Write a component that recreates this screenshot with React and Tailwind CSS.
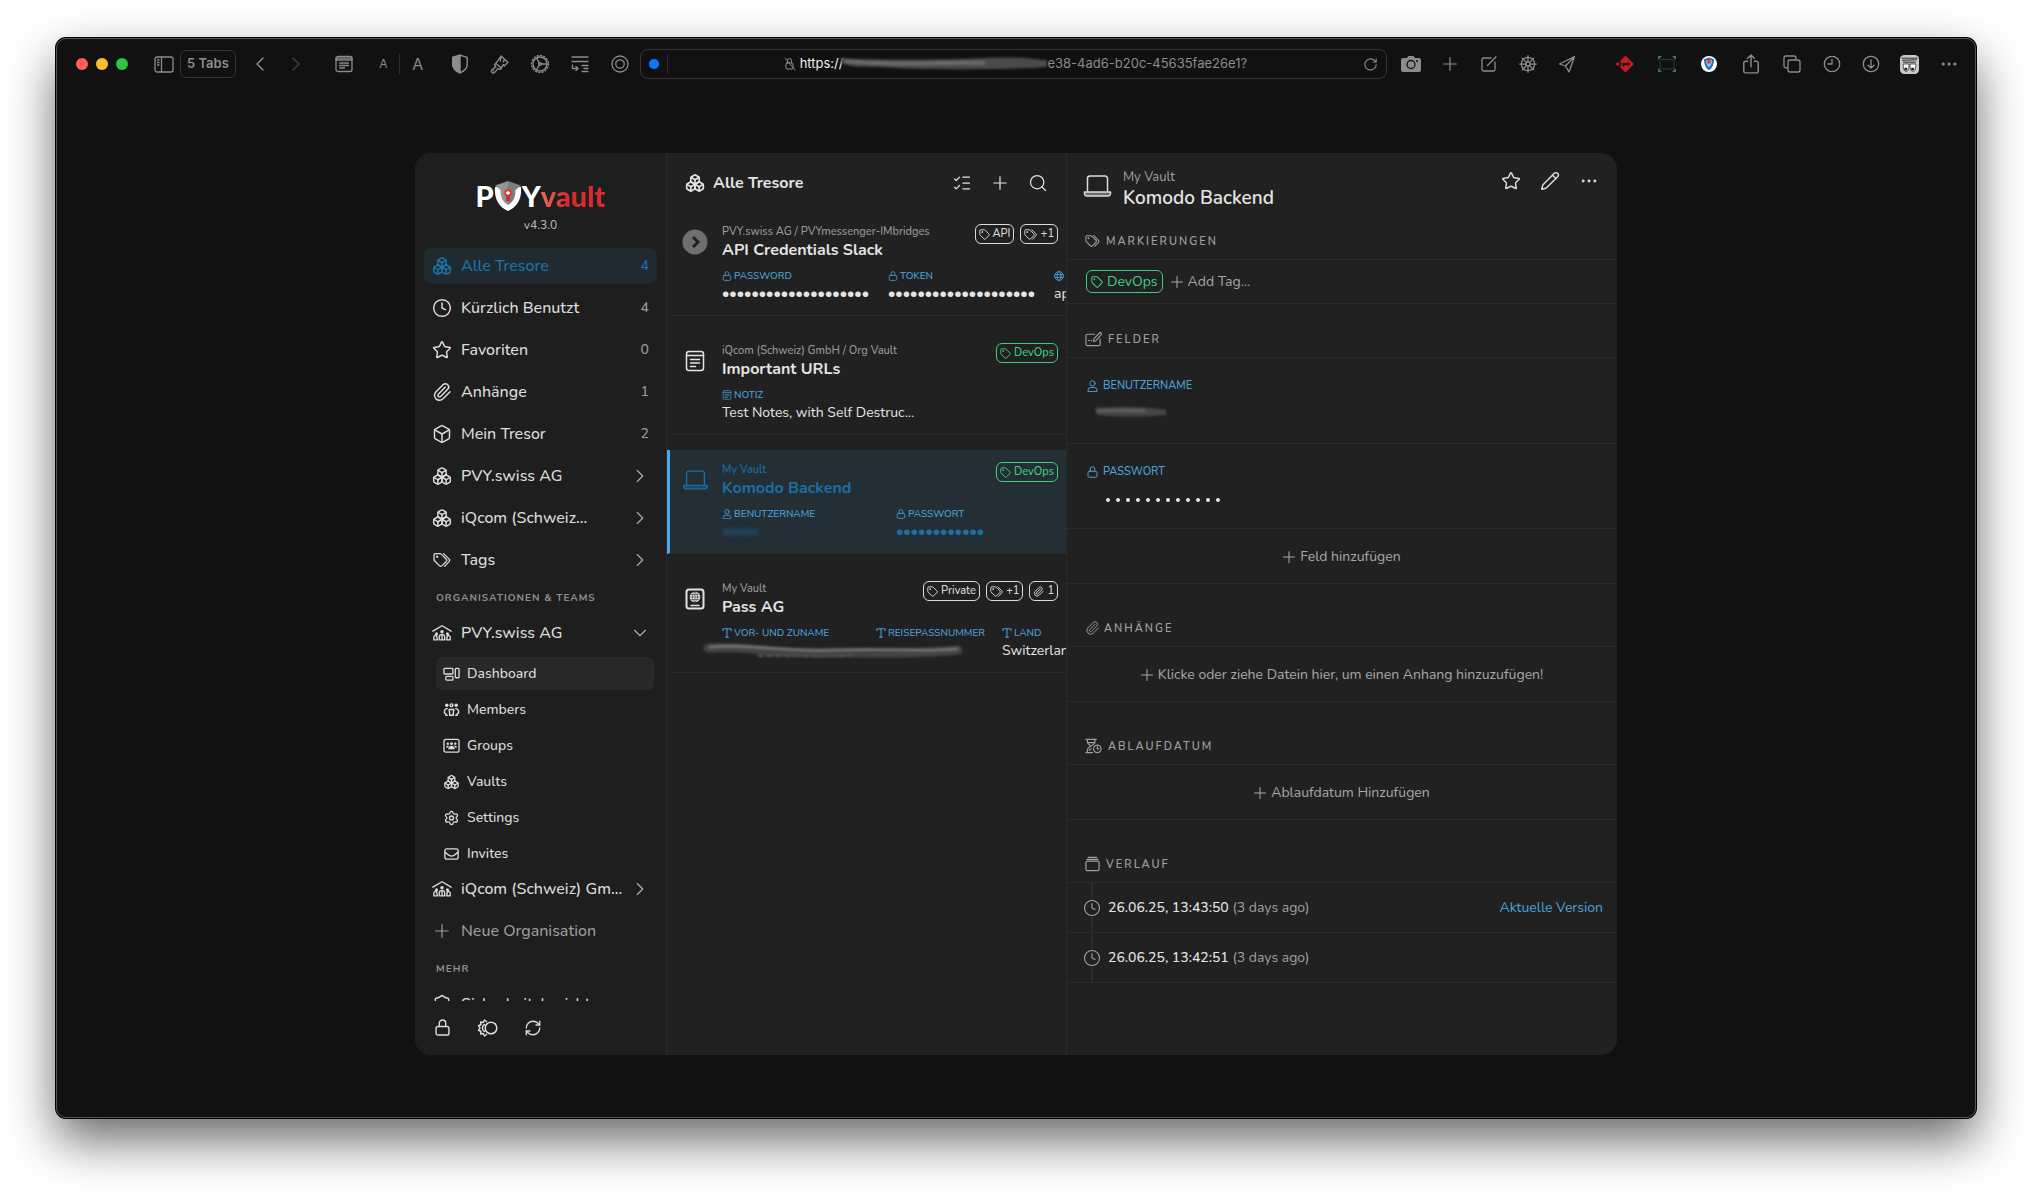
import {
    Box, Boxes, ChevronDown, ChevronLeft, ChevronRight, Clock, Ellipsis, ListChecks, Paperclip,
    Pencil, RefreshCw, RotateCw, Search, Settings, ShieldCheck, ShipWheel, Star,
} from 'lucide-react'

const stroke = { fill: 'none', stroke: 'currentColor', strokeWidth: 1.5, strokeLinecap: 'round', strokeLinejoin: 'round' }

// ---------- Icons ----------

function Plus({ className }) {
    return (
        <svg viewBox="0 0 14 14" className={className} {...stroke} strokeWidth="1.200">
            <path d="M7 .7v12.600M.7 7h12.600" />
        </svg>
    )
}

function Lock({ className }) {
    return (
        <svg viewBox="0 0 14 16" className={className} {...stroke} strokeWidth="1.300">
            <rect x="1" y="7" width="12" height="8" rx="1.800" />
            <path d="M4 7V4a3 3 0 0 1 6 0v3" />
        </svg>
    )
}

function User({ className }) {
    return (
        <svg viewBox="0 0 14 16" className={className} {...stroke} strokeWidth="1.300">
            <circle cx="7" cy="4.500" r="3.500" />
            <path d="M1 15v-1.500A3.500 3.500 0 0 1 4.500 10h5a3.500 3.500 0 0 1 3.500 3.500V15z" />
        </svg>
    )
}

function Tag({ className }) {
    return (
        <svg viewBox="0 0 14 14" className={className} {...stroke} strokeWidth="1.200">
            <path d="M1 2.200A1.200 1.200 0 0 1 2.200 1h4.500a1.500 1.500 0 0 1 1.060.440l4.800 4.800a1.500 1.500 0 0 1 0 2.120l-4.200 4.200a1.500 1.500 0 0 1-2.120 0l-4.800-4.800A1.500 1.500 0 0 1 1 6.700z" />
            <circle cx="3.900" cy="3.900" r=".5" />
        </svg>
    )
}

function Tags({ className }) {
    return (
        <svg viewBox="0 0 17 14" className={className} {...stroke} strokeWidth="1.200">
            <path d="M1 2.200A1.200 1.200 0 0 1 2.200 1h4.500a1.500 1.500 0 0 1 1.060.440l4.800 4.800a1.500 1.500 0 0 1 0 2.120l-4.200 4.200a1.500 1.500 0 0 1-2.120 0l-4.800-4.800A1.500 1.500 0 0 1 1 6.700z" />
            <circle cx="3.900" cy="3.900" r=".5" />
            <path d="M10 1l5.200 5.200a1.700 1.700 0 0 1 0 2.300L11 13" />
        </svg>
    )
}

function Text({ className }) {
    return (
        <svg viewBox="0 0 12 12" className={className} {...stroke} strokeWidth="1.200">
            <path d="M1 3.200V1h10v2.200M6 1v10M4.200 11h3.600" />
        </svg>
    )
}

function Laptop({ className }) {
    return (
        <svg viewBox="0 0 28 22" className={className} {...stroke}>
            <path d="M4 16V3.500A2.500 2.500 0 0 1 6.500 1h15A2.500 2.500 0 0 1 24 3.500V16" />
            <path d="M1 17h26v1.500a2.500 2.500 0 0 1-2.500 2.500h-21A2.500 2.500 0 0 1 1 18.500z" fill="currentColor" fillOpacity="0.4" />
        </svg>
    )
}

function Note({ className }) {
    return (
        <svg viewBox="0 0 20 22" className={className} {...stroke}>
            <rect x="1.500" y="1.500" width="17" height="19" rx="2.500" />
            <path d="M1.500 5.500h17M5.500 9.500h9M5.500 13h9M5.500 16.500h5" />
        </svg>
    )
}

function Passport({ className }) {
    return (
        <svg viewBox="0 0 20 22" className={className} {...stroke} strokeWidth="2">
            <rect x="1.500" y="1.500" width="17" height="19" rx="2.500" />
            <circle cx="10" cy="9" r="5.300" fill="currentColor" stroke="none" />
            <path d="M5 9h10M10 4v10M6 6.500h8M6 11.500h8" stroke="#212121" strokeWidth="0.500" />
            <ellipse cx="10" cy="9" rx="2.500" ry="5" stroke="#212121" strokeWidth="0.500" />
            <path d="M6 17.500h8" strokeWidth="1.500" />
        </svg>
    )
}

function CircleArrow({ className }) {
    return (
        <svg viewBox="0 0 26 26" className={className}>
            <circle cx="13" cy="13" r="12.500" fill="#6f6f6f" />
            <path d="M11 8l5 5-5 5" fill="none" stroke="#212121" strokeWidth="3" />
        </svg>
    )
}

function House({ className }) {
    return (
        <svg viewBox="0 0 22 18" className={className} {...stroke}>
            <path d="M1 7l10-6 10 6" />
            <circle cx="11" cy="7.500" r="1.900" fill="currentColor" stroke="none" />
            <circle cx="5" cy="10" r="1.700" fill="currentColor" stroke="none" />
            <circle cx="17" cy="10" r="1.700" fill="currentColor" stroke="none" />
            <path d="M8 16.500v-3a3 3 0 0 1 6 0v3zM2 16.500v-2.500a2 2 0 0 1 3-2M20 16.500v-2.500a2 2 0 0 0-3-2M2 16.500h3M17 16.500h3M11 12v4M5 12l1 4.500M17 12l-1 4.500" strokeWidth="1.500" />
        </svg>
    )
}

function Dashboard({ className }) {
    return (
        <svg viewBox="0 0 18 16" className={className} {...stroke} strokeWidth="1.400">
            <rect x="1" y="2" width="9.500" height="6" rx="1" />
            <rect x="3" y="10.500" width="7.500" height="4" rx="1" />
            <rect x="13" y="2" width="4" height="10" rx="1" />
        </svg>
    )
}

function Members({ className }) {
    return (
        <svg viewBox="0 0 18 14" className={className} {...stroke}>
            <circle cx="4" cy="2" r="1.800" fill="currentColor" stroke="none" />
            <circle cx="9" cy="2" r="1.500" />
            <circle cx="14" cy="2" r="1.800" fill="currentColor" stroke="none" />
            <path d="M7 12.500V9.500L6.500 6.500h5L11 9.500v3zM4.500 5.500c-2 0-3.200 1.500-3 4 .1 1 1 1.500 1.500 1.500v1.500h1.500M13.500 5.500c2 0 3.200 1.500 3 4-.1 1-1 1.500-1.500 1.500v1.500h-1.500" />
        </svg>
    )
}

function Groups({ className }) {
    return (
        <svg viewBox="0 0 18 16" className={className} {...stroke} strokeWidth="1.400">
            <rect x="1" y="1" width="16" height="13.500" rx="2" />
            <g fill="currentColor" stroke="none">
                <circle cx="5" cy="5.500" r="1.300" />
                <circle cx="9" cy="5.500" r="1.500" />
                <circle cx="13" cy="5.500" r="1.300" />
                <path d="M3 9.500q1-2.500 3-2l-.5 2zM15 9.500q-1-2.500-3-2l.5 2zM5.500 11.500c0-5 7-5 7 0z" />
            </g>
        </svg>
    )
}

function Envelope({ className }) {
    return (
        <svg viewBox="0 0 18 16" className={className} {...stroke} strokeWidth="1.400">
            <rect x="2" y="2.500" width="14" height="11" rx="2" />
            <path d="M2 6l4.500 3.500q2.500 1.500 5 0L16 6" />
        </svg>
    )
}

function Globe({ className }) {
    return (
        <svg viewBox="0 0 12 12" className={className} {...stroke} strokeWidth="1">
            <circle cx="6" cy="6" r="5.300" />
            <ellipse cx="6" cy="6" rx="2.300" ry="5.300" />
            <path d="M1.200 4.300h9.600M1.200 7.700h9.600" />
        </svg>
    )
}

function FieldEdit({ className }) {
    return (
        <svg viewBox="0 0 18 16" className={className} {...stroke} strokeWidth="1.200">
            <path d="M10 3H2.500A1.500 1.500 0 0 0 1 4.500v9A1.500 1.500 0 0 0 2.500 15h12a1.500 1.500 0 0 0 1.500-1.500V8" />
            <path d="M9 10.500l.6-2.800L15.400 1.400q1.300-.6 1.800.6t-.2 1.700L11.500 9.800z" />
            <path d="M4 9.500h.1M6.500 9.500h.1" strokeWidth="1.600" />
        </svg>
    )
}

function Hourglass({ className }) {
    return (
        <svg viewBox="0 0 18 16" className={className} {...stroke} strokeWidth="1.300">
            <path d="M1 1h11M1 15h7M2.500 1v2.500q0 2 3.500 4.500-3.500 2.500-3.500 4.500V15M10.500 1v2.500q0 2-4 4.500M4 4.500h5M4.500 12.500l2-1.500" />
            <circle cx="13" cy="11" r="4" />
            <path d="M13 9v2h1.500" />
        </svg>
    )
}

function History({ className }) {
    return (
        <svg viewBox="0 0 16 16" className={className} {...stroke} strokeWidth="1.300">
            <rect x="1" y="5" width="14" height="10" rx="1.500" />
            <path d="M2 3h12M3.500 1h9" />
        </svg>
    )
}

function SunMoon({ className }) {
    return (
        <svg viewBox="0 0 22 18" className={className} {...stroke}>
            <circle cx="15" cy="9" r="5.800" />
            <path d="M10.500 2.500L8.500 1l-1.200 2.500-2.700-.5.3 2.700L2.500 6.700 4 9l-1.500 2.300 2.400 1-.3 2.700 2.700-.5L8.500 17l2-1.500M8.500 5.500a4 4 0 0 0 0 7" />
        </svg>
    )
}

// ---------- Browser toolbar ----------

function BrowserIcon({ children, label, className = 'w-10' }) {
    return (
        <button aria-label={label} className={`${className} h-8 shrink-0 flex items-center justify-center`}>
            {children}
        </button>
    )
}

function Svg({ children, size = 'size-[18px]', ...rest }) {
    return (
        <svg viewBox="0 0 18 18" className={size} {...stroke} strokeWidth="1.300" {...rest}>
            {children}
        </svg>
    )
}

function BrowserBar() {
    return (
        <header className="h-[50px] shrink-0 flex items-center pl-[19px] text-[#8c8c8c] font-['Inter',sans-serif]">
            <div className="flex gap-2">
                <span className="size-3 rounded-full bg-[#ff5f57]" />
                <span className="size-3 rounded-full bg-[#febc2e]" />
                <span className="size-3 rounded-full bg-[#28c840]" />
            </div>
            <BrowserIcon label="Sidebar" className="ml-6 w-6">
                <svg viewBox="0 0 20 17" className="w-5" {...stroke} strokeWidth="1.300">
                    <rect x="1" y="1" width="18" height="15" rx="2" />
                    <path d="M7.500 1v15M3.500 4h1.500M3.500 6.500h1.500M3.500 9h1.500" />
                </svg>
            </BrowserIcon>
            <button className="ml-1 h-7 px-1.5 shrink-0 rounded-md border border-[#363636] text-[13px] font-semibold">5 Tabs</button>
            <BrowserIcon label="Back" className="ml-1.5 w-9"><ChevronLeft size={24} strokeWidth={1.5} /></BrowserIcon>
            <BrowserIcon label="Forward" className="w-9 text-[#3f3f3f]"><ChevronRight size={24} strokeWidth={1.5} /></BrowserIcon>
            <BrowserIcon label="Reader" className="ml-2.5 w-10">
                <Svg>
                    <rect x="1" y="1.500" width="16" height="15" rx="2" />
                    <path d="M1 3.200h16M1 5h16M4.500 8h9M4.500 10.500h9M4.500 13h5" />
                </Svg>
            </BrowserIcon>
            <button className="w-9 h-5 pl-1 border-r border-[#2c2c2c] text-xs leading-5">A</button>
            <button className="w-9 h-5 mr-1 text-base leading-5">A</button>
            <BrowserIcon label="Privacy">
                <Svg size="size-5">
                    <path d="M9 1l6.500 2v6c0 4-3 6.500-6.500 8-3.500-1.500-6.500-4-6.500-8V3z" />
                    <path d="M9 1v16c-3.500-1.500-6.500-4-6.500-8V3z" fill="currentColor" />
                </Svg>
            </BrowserIcon>
            <BrowserIcon label="Brush">
                <Svg size="size-[19px]">
                    <path d="M10.500 1l6.500 6-3.500 3.500-.7-1.500-1.800 2.500M10.500 1L5.500 8l5.500 4.500-1.500 1.200-2-1-3 3.700a1.700 1.700 0 0 1-2.700-2.200L5.500 11 4.300 9.300 5.500 8M10.500 1l-.8 4.500M13.700 4l-1.200 2.500M3.300 15h.1" />
                </Svg>
            </BrowserIcon>
            <BrowserIcon label="Tools">
                <Svg size="size-5">
                    <circle cx="9" cy="9" r="6.300" />
                    <circle cx="9" cy="9" r="7.600" strokeDasharray="1 2" />
                    <circle cx="9" cy="9" r="1.200" />
                    <path d="M10.500 9h4.500M8.300 8L6 3.800M8.300 10L6 14.200" />
                </Svg>
            </BrowserIcon>
            <BrowserIcon label="Wrap lines">
                <Svg>
                    <path d="M1 2h16M1 6.500h16M1.500 10v3.500h5M5 11.500l2 2-2 2M11 10.500h6M13 13.500h4M11 16.500h6" />
                </Svg>
            </BrowserIcon>
            <BrowserIcon label="Focus">
                <Svg>
                    <circle cx="9" cy="9" r="8" />
                    <circle cx="9" cy="9" r="4.200" />
                </Svg>
            </BrowserIcon>
            <div className="flex-1 min-w-0 h-[30px] flex items-center rounded-lg border border-[#363636] px-2">
                <span className="size-2.5 rounded-full bg-[#0a7aff]" />
                <span className="w-px h-5 ml-2 bg-[#2c2c2c]" />
                <div className="flex-1 flex items-center justify-center text-[13px] whitespace-nowrap">
                    <svg viewBox="0 0 12 14" className="h-3.5 mr-1" {...stroke} strokeWidth="1">
                        <rect x="2" y="6" width="7" height="6" rx="1" />
                        <path d="M3.500 6V3.500a2 2 0 0 1 4 0V6M1 1l10 12" />
                    </svg>
                    <span className="text-[#f0f0f0]">https://</span>
                    <svg viewBox="0 0 206 14" className="w-[206px] -ml-0.5 blur-[1px]">
                        <path d="M0 1c20 2 100 2 143 0s50 2 63 2v7c-40 3-120 3-150 1S14 12 0 6z" fill="#4a4a4a" />
                        <path d="M4 4c40 5 90 1 140 2" stroke="#6a6a6a" strokeWidth="4" fill="none" />
                    </svg>
                    <span>e38-4ad6-b20c-45635fae26e1?</span>
                </div>
                <button aria-label="Reload"><RotateCw size={15} strokeWidth={1.75} /></button>
            </div>
            <BrowserIcon label="Screenshot" className="ml-1 w-[39px]">
                <svg viewBox="0 0 20 18" className="w-5">
                    <path d="M2 3h4l1.500-2h5L14 3h4a2 2 0 0 1 2 2v10a2 2 0 0 1-2 2H2a2 2 0 0 1-2-2V5a2 2 0 0 1 2-2z" fill="currentColor" />
                    <circle cx="10" cy="9.500" r="4" fill="none" stroke="#111" strokeWidth="1.300" />
                    <circle cx="16" cy="6" r="1" fill="#111" />
                </svg>
            </BrowserIcon>
            <BrowserIcon label="New tab" className="w-[39px]"><Plus className="w-3.5" /></BrowserIcon>
            <BrowserIcon label="Compose" className="w-[39px]">
                <Svg>
                    <path d="M11 3H3.500A1.500 1.500 0 0 0 2 4.500v10A1.500 1.500 0 0 0 3.500 16h10a1.500 1.500 0 0 0 1.500-1.500V7M7.500 10.500L16 1.800" />
                </Svg>
            </BrowserIcon>
            <BrowserIcon label="Wheel" className="w-[39px]"><ShipWheel size={20} strokeWidth={1.5} /></BrowserIcon>
            <BrowserIcon label="Send" className="w-[39px]">
                <Svg>
                    <path d="M16.500 1.500L1.500 9l6 2 3.500 6zM16.500 1.500L7.500 11" />
                </Svg>
            </BrowserIcon>
            <BrowserIcon label="Redirect" className="ml-[18px] w-[42px]">
                <svg viewBox="0 0 18 18" className="size-[18px]">
                    <path d="M9.500.5L18 9l-8.500 8.500L4 12l1.500-3L4 6z" fill="#c8191b" />
                    <circle cx="1.800" cy="9" r="1.800" fill="#c8191b" />
                    <path d="M6.500 8h5V6.500l3 2.500-3 2.500V10h-3v1.500h-2z" fill="#111" />
                </svg>
            </BrowserIcon>
            <BrowserIcon label="Capture area" className="w-[42px]">
                <svg viewBox="0 0 18 18" className="size-[18px]">
                    <path d="M0 1h4L0 5zM18 1h-4l4 4zM0 17h4l-4-4zM18 17h-4l4-4z" fill="#2f8a35" />
                    <rect x="2" y="4.500" width="14" height="9.500" rx="1" fill="none" stroke="#3a3a3a" />
                </svg>
            </BrowserIcon>
            <BrowserIcon label="PVY vault" className="w-[42px]">
                <svg viewBox="0 0 18 18" className="size-[18px]">
                    <circle cx="9" cy="9" r="8" fill="#fff" />
                    <path d="M9 2.500l5 1.800c0 5-1.500 8.500-5 11-3.500-2.500-5-6-5-11z" fill="#1c6fb3" />
                    <path d="M9 4.500l3 1c0 3-1 5.500-3 7-2-1.500-3-4-3-7z" fill="#8ec1ea" />
                    <rect x="7.500" y="4" width="3" height="4.500" fill="#d8393c" />
                </svg>
            </BrowserIcon>
            <BrowserIcon label="Share" className="w-[42px]">
                <Svg size="size-5">
                    <path d="M6 6.500H4A1.500 1.500 0 0 0 2.500 8v7.500A1.500 1.500 0 0 0 4 17h10a1.500 1.500 0 0 0 1.500-1.500V8A1.500 1.500 0 0 0 14 6.500h-2M9 11.500V1M6 3.800L9 1l3 2.800" />
                </Svg>
            </BrowserIcon>
            <BrowserIcon label="Tabs">
                <Svg>
                    <rect x="5" y="5" width="12" height="12" rx="2" />
                    <path d="M4 13H3a2 2 0 0 1-2-2V3a2 2 0 0 1 2-2h8a2 2 0 0 1 2 2v1" />
                </Svg>
            </BrowserIcon>
            <BrowserIcon label="History" className="w-[39px]">
                <Svg>
                    <circle cx="9" cy="9" r="7.700" />
                    <path d="M9 4.500V9H5" />
                </Svg>
            </BrowserIcon>
            <BrowserIcon label="Downloads" className="w-[39px]">
                <Svg>
                    <circle cx="9" cy="9" r="7.700" />
                    <path d="M9 5v8M6 10.200L9 13l3-2.800" />
                </Svg>
            </BrowserIcon>
            <BrowserIcon label="Incognito" className="w-[39px]">
                <svg viewBox="0 0 18 18" className="size-[19px]">
                    <rect width="18" height="18" rx="4" fill="#c9c9cc" />
                    <path d="M1.500 3h15M2 5l14-.5M3 6.800h12" stroke="#222" strokeWidth="0.900" />
                    <path d="M3 8.500h5.500c0 4-.5 7-2.700 7S3 12 3 8.500zM9.500 8.500H15c0 4-.5 7-2.700 7s-2.800-3-2.800-7z" fill="#fff" stroke="#222" strokeWidth=".7" />
                    <circle cx="5.500" cy="13.300" r="1.500" fill="#222" />
                    <circle cx="12" cy="13.300" r="1.500" fill="#222" />
                </svg>
            </BrowserIcon>
            <BrowserIcon label="More" className="w-[39px] mr-[7px]"><Ellipsis size={20} strokeWidth={1.75} /></BrowserIcon>
        </header>
    )
}

// ---------- Sidebar ----------

const vaultNav = [
    { icon: Boxes, name: 'Alle Tresore', count: 4, active: true },
    { icon: Clock, name: 'Kürzlich Benutzt', count: 4 },
    { icon: Star, name: 'Favoriten', count: 0 },
    { icon: Paperclip, name: 'Anhänge', count: 1 },
    { icon: Box, name: 'Mein Tresor', count: 2 },
    { icon: Boxes, name: 'PVY.swiss AG' },
    { icon: Boxes, name: 'iQcom (Schweiz...' },
    { icon: Tags, name: 'Tags', iconClass: 'px-px' },
]

const orgNav = [
    { icon: Dashboard, name: 'Dashboard', active: true },
    { icon: Members, name: 'Members' },
    { icon: Groups, name: 'Groups' },
    { icon: Boxes, name: 'Vaults' },
    { icon: Settings, name: 'Settings' },
    { icon: Envelope, name: 'Invites' },
]

function NavRow({ icon: Icon, name, active, iconClass = '', children }) {
    return (
        <a
            href="#"
            className={`h-9 shrink-0 px-2 flex items-center rounded-lg text-base ${active ? 'bg-[#202b31] text-[#1f72a8]' : 'text-[#dcdcdc]'}`}
        >
            <Icon className={`w-5 h-5 mr-[9px] shrink-0 ${iconClass}`} strokeWidth={1.75} />
            <span className="flex-1 truncate">{name}</span>
            {children}
        </a>
    )
}

function NavHeading({ children }) {
    return <h2 className="shrink-0 mt-1.5 mb-[3px] ml-3 h-4 leading-4 text-[10px] font-bold tracking-widest uppercase text-[#8f8f8f]">{children}</h2>
}

function Logo() {
    return (
        <div className="h-8 flex items-center justify-center font-['Lato',sans-serif] font-black text-[29px] leading-8">
            <span className="text-white">P</span>
            <svg viewBox="0 0 28 30" className="w-7 h-[30px]">
                <path d="M1 6h6c0 9 2 14 7 17 5-3 7-8 7-17h6c1 12-4 20-13 24C5 26 0 18 1 6z" fill="#fff" />
                <path d="M14 0l13 4.500L21.500 9c0 8-2.500 12-7.500 15z" fill="#7c7c7c" />
                <path d="M14 0v24C9 21 6.500 17 6.500 9L1 4.500z" fill="#949494" />
                <circle cx="14" cy="12" r="3.800" fill="#e0393a" />
                <path d="M12 13h4v7h-4z" fill="#c92d30" />
                <path d="M14 10v4M12 12h4" stroke="#fff" strokeWidth="1.400" />
            </svg>
            <span className="text-white">Y</span>
            <span className="bg-linear-to-r from-[#e5685c] to-[#d92b2e] to-40% bg-clip-text text-transparent">vault</span>
        </div>
    )
}

function Sidebar() {
    return (
        <aside className="w-[251px] shrink-0 flex flex-col bg-[#1e1e1e]">
            <div className="pt-[27px] pb-3.5 text-center">
                <Logo />
                <p className="mt-1 text-xs leading-[18px] text-[#b4b4b4]">v4.3.0</p>
            </div>
            <nav className="flex-1 min-h-0 overflow-hidden px-[9px] flex flex-col gap-1.5">
                {vaultNav.map((item, index) => (
                    <NavRow key={index} {...item}>
                        {item.count === undefined
                            ? <ChevronRight size={22} strokeWidth={1.25} className="-mr-0.5 text-[#b0b0b0]" />
                            : <span className={item.active ? 'text-sm' : 'text-sm text-[#9a9a9a]'}>{item.count}</span>}
                    </NavRow>
                ))}
                <NavHeading>Organisationen &amp; Teams</NavHeading>
                <div className="shrink-0">
                    <NavRow icon={House} name="PVY.swiss AG">
                        <ChevronDown size={22} strokeWidth={1.25} className="-mr-0.5 text-[#b0b0b0]" />
                    </NavRow>
                    <ul className="mt-1.5 -mb-[5px] ml-3 mr-[3px] flex flex-col gap-[3px]">
                        {orgNav.map(({ icon: Icon, name, active }) => (
                            <li key={name}>
                                <a
                                    href="#"
                                    className={`h-[33px] px-[7px] flex items-center gap-[7px] rounded-md text-sm text-[#dcdcdc] ${active ? 'bg-[#282828]' : ''}`}
                                >
                                    <Icon className="w-[17px] h-4" strokeWidth={2} />
                                    {name}
                                </a>
                            </li>
                        ))}
                    </ul>
                </div>
                <NavRow icon={House} name="iQcom (Schweiz) Gm...">
                    <ChevronRight size={22} strokeWidth={1.25} className="-mr-0.5 text-[#b0b0b0]" />
                </NavRow>
                <button className="h-9 shrink-0 px-[11px] flex items-center gap-3 text-base text-[#9a9a9a]">
                    <Plus className="w-3.5" />
                    Neue Organisation
                </button>
                <NavHeading>Mehr</NavHeading>
                <NavRow icon={ShieldCheck} name="Sicherheitsbericht" />
            </nav>
            <div className="h-[54px] shrink-0 flex items-center gap-[26px] px-5 text-[#dcdcdc]">
                <button aria-label="Sperren"><Lock className="w-[15px]" /></button>
                <button aria-label="Darstellung"><SunMoon className="w-[22px]" /></button>
                <button aria-label="Aktualisieren"><RefreshCw size={18} strokeWidth={1.75} /></button>
            </div>
        </aside>
    )
}

// ---------- Item list ----------

function Chip({ icon: Icon, children, className = 'border-[#dcdcdc] text-[#dcdcdc]' }) {
    return (
        <span className={`h-5 px-[3px] flex items-center gap-[3px] rounded-md border text-[11px] ${className}`}>
            <Icon className="w-auto h-[11px]" strokeWidth={2} />
            {children}
        </span>
    )
}

const green = 'border-[#3ecf80] text-[#3ecf80]'

const items = [
    {
        icon: CircleArrow,
        iconClass: 'w-[26px]',
        vault: 'PVY.swiss AG / PVYmessenger-IMbridges',
        title: 'API Credentials Slack',
        chips: [{ icon: Tag, text: 'API' }, { icon: Tags, text: '+1' }],
        fields: [
            { icon: Lock, label: 'Password', dots: 20, width: 'w-[166px]' },
            { icon: Lock, label: 'Token', dots: 20, width: 'w-[166px]' },
            { icon: Globe, value: 'api', width: 'w-[166px]' },
        ],
    },
    {
        icon: Note,
        iconClass: 'w-5',
        vault: 'iQcom (Schweiz) GmbH / Org Vault',
        title: 'Important URLs',
        chips: [{ icon: Tag, text: 'DevOps', className: green }],
        fields: [{ icon: Note, label: 'Notiz', value: 'Test Notes, with Self Destruc...', width: 'w-[260px]' }],
    },
    {
        icon: Laptop,
        iconClass: 'w-[25px]',
        vault: 'My Vault',
        title: 'Komodo Backend',
        active: true,
        chips: [{ icon: Tag, text: 'DevOps', className: green }],
        fields: [
            { icon: User, label: 'Benutzername', width: 'w-[174px]', smudge: true },
            { icon: Lock, label: 'Passwort', dots: 12, width: 'w-[166px]' },
        ],
    },
    {
        icon: Passport,
        iconClass: 'w-5',
        vault: 'My Vault',
        title: 'Pass AG',
        masked: true,
        chips: [{ icon: Tag, text: 'Private' }, { icon: Tags, text: '+1' }, { icon: Paperclip, text: '1' }],
        fields: [
            { icon: Text, label: 'Vor- und Zuname', width: 'w-[154px]' },
            { icon: Text, label: 'Reisepassnummer', width: 'w-[126px]' },
            { icon: Text, label: 'Land', value: 'Switzerland', width: 'w-[126px]' },
        ],
    },
]

function Field({ icon: Icon, label, value, dots, width, smudge }) {
    return (
        <div className={`${width} shrink-0`}>
            <div className="h-4 flex items-center gap-[2px] text-[10px] uppercase text-[#4aa3dc]">
                <Icon className="w-2.5 h-2.5" />
                {label}
            </div>
            <div className="h-5 flex items-center text-sm font-normal whitespace-nowrap">
                {dots && <span className="font-['Liberation_Sans',sans-serif] text-[21px] leading-5">{'•'.repeat(dots)}</span>}
                {smudge && <span className="w-9 h-1.5 rounded-full bg-[#1f5d88] opacity-50 blur-[2px]" />}
                {value}
            </div>
        </div>
    )
}

function Item({ icon: Icon, iconClass, vault, title, chips, fields, active, masked }) {
    return (
        <li
            className={`relative h-[104px] mb-[15px] pr-2 flex border-b border-b-[#2b2b2b] border-l-[3px] ${active ? 'bg-[#232e35] border-l-[#4aa8e8] text-[#1d6ea5]' : 'border-l-transparent text-[#e4e4e4]'}`}
        >
            <div className="w-[52px] shrink-0 pt-[17px] pr-0.5 h-11 flex justify-center">
                <Icon className={`${iconClass} h-[26px]`} />
            </div>
            <div className="flex-1 min-w-0 pt-3">
                <div className="flex justify-between">
                    <div>
                        <p className={active ? 'text-[11px] leading-4' : 'text-[11px] leading-4 text-[#9a9a9a]'}>{vault}</p>
                        <h3 className="text-base leading-5 font-bold">{title}</h3>
                    </div>
                    <div className="flex gap-1.5">
                        {chips.map((chip, index) => (
                            <Chip key={index} icon={chip.icon} className={chip.className}>{chip.text}</Chip>
                        ))}
                    </div>
                </div>
                <div className="mt-2 -mr-2 flex overflow-hidden">
                    {fields.map((field, index) => <Field key={index} {...field} />)}
                </div>
            </div>
            {masked && (
                <svg viewBox="0 0 264 18" className="absolute left-8 top-[72px] w-[264px] blur-[1px]" fill="none" strokeLinecap="round">
                    <path d="M6 7C50 4 60 13 120 12s90 2 136-3" stroke="#444" strokeWidth="9" />
                    <path d="M8 6C50 2 70 11 130 9s90 2 125-1" stroke="#707070" strokeWidth="3" />
                    <path d="M56 15h92" stroke="#555" strokeWidth="2" strokeDasharray="5 4" />
                </svg>
            )}
        </li>
    )
}

function ItemList() {
    return (
        <section className="w-[401px] shrink-0 flex flex-col overflow-hidden border-x border-[#2b2b2b]">
            <header className="h-[59px] shrink-0 px-[18px] flex items-center gap-2 text-[#e4e4e4]">
                <Boxes size={20} strokeWidth={2} />
                <h1 className="flex-1 text-base font-bold">Alle Tresore</h1>
                <div className="flex items-center gap-[18px]">
                    <button aria-label="Auswählen"><ListChecks size={20} strokeWidth={1.5} /></button>
                    <button aria-label="Hinzufügen" className="w-5 flex justify-center"><Plus className="w-3.5" /></button>
                    <button aria-label="Suchen"><Search size={20} strokeWidth={1.5} /></button>
                </div>
            </header>
            <ul>
                {items.map((item) => <Item key={item.title} {...item} />)}
            </ul>
        </section>
    )
}

// ---------- Item detail ----------

function SectionHeading({ icon: Icon, children, className = 'h-[63px]', iconClass = 'w-[17px]' }) {
    return (
        <h3 className={`${className} pl-[18px] pb-[9px] flex items-end gap-1.5 border-b border-[#2b2b2b] text-[11px] leading-4 font-semibold tracking-[2px] uppercase text-[#a0a0a0]`}>
            <Icon className={`${iconClass} h-4 mb-px`} strokeWidth={1.5} />
            {children}
        </h3>
    )
}

function AddRow({ children }) {
    return (
        <button className="w-full h-[55px] pt-0.5 flex items-center justify-center gap-[5px] border-b border-[#2b2b2b] text-sm text-[#a8a8a8]">
            <Plus className="w-3" />
            {children}
        </button>
    )
}

function FieldName({ icon: Icon, children }) {
    return (
        <h4 className="flex items-center gap-[5px] text-[11px] leading-4 font-medium uppercase text-[#4aa3dc]">
            <Icon className="w-[11px] h-3" />
            {children}
        </h4>
    )
}

function Detail() {
    return (
        <section className="flex-1 min-w-0 flex flex-col font-normal">
            <header className="h-[59px] shrink-0 pl-4 pr-[18px] pt-3.5 flex">
                <Laptop className="w-[29px] h-[22px] mt-2 mr-[11px] text-[#dcdcdc]" />
                <div className="flex-1">
                    <p className="text-[13px] leading-5 text-[#a0a0a0]">My Vault</p>
                    <h2 className="text-[19px] leading-[22px] font-semibold text-[#e4e4e4]">Komodo Backend</h2>
                </div>
                <div className="h-7 flex items-center gap-[19px] text-[#dcdcdc]">
                    <button aria-label="Favorit"><Star size={20} strokeWidth={1.75} /></button>
                    <button aria-label="Bearbeiten"><Pencil size={20} strokeWidth={1.75} /></button>
                    <button aria-label="Mehr"><Ellipsis size={20} strokeWidth={1.5} /></button>
                </div>
            </header>
            <SectionHeading icon={Tags} className="h-12" iconClass="w-[15px]">Markierungen</SectionHeading>
            <div className="h-11 pl-[19px] flex items-center gap-2 border-b border-[#2b2b2b] text-sm text-[#a8a8a8]">
                <span className="h-[23px] px-1 flex items-center gap-1 rounded-md border border-[#3ecf80] text-[#3ecf80]">
                    <Tag className="w-3" />
                    DevOps
                </span>
                <button className="flex items-center gap-[5px]">
                    <Plus className="w-3" />
                    Add Tag...
                </button>
            </div>
            <SectionHeading icon={FieldEdit} className="h-[54px]">Felder</SectionHeading>
            <div className="h-[86px] pt-5 pl-5 border-b border-[#2b2b2b]">
                <FieldName icon={User}>Benutzername</FieldName>
                <svg viewBox="0 0 80 12" className="mt-3 ml-1 w-20 blur-[1px]">
                    <path d="M4 2c20-1 50-2 71 2v5c-20 2-50 2-69 0z" fill="#454545" />
                    <path d="M5 5c15-1 30-1 50 0" stroke="#606060" strokeWidth="3" fill="none" />
                </svg>
            </div>
            <div className="h-[85px] pt-5 pl-5 border-b border-[#2b2b2b]">
                <FieldName icon={Lock}>Passwort</FieldName>
                <div className="mt-[18px] ml-[19px] flex gap-1.5">
                    {[...Array(12)].map((_, index) => <span key={index} className="size-1 rounded-full bg-[#e4e4e4]" />)}
                </div>
            </div>
            <AddRow>Feld hinzufügen</AddRow>
            <SectionHeading icon={Paperclip} iconClass="w-[15px] -mr-0.5">Anhänge</SectionHeading>
            <AddRow>Klicke oder ziehe Datein hier, um einen Anhang hinzuzufügen!</AddRow>
            <SectionHeading icon={Hourglass} iconClass="w-[17px]">Ablaufdatum</SectionHeading>
            <AddRow>Ablaufdatum Hinzufügen</AddRow>
            <SectionHeading icon={History} iconClass="w-[15px]">Verlauf</SectionHeading>
            <ul className="text-sm">
                {['26.06.25, 13:43:50', '26.06.25, 13:42:51'].map((date, index) => (
                    <li key={date} className="h-[50px] pl-4 pr-3.5 flex items-center gap-[7px] border-b border-[#2b2b2b]">
                        <div className="h-full flex flex-col items-center text-[#a0a0a0]">
                            <span className="flex-1 w-0.5 bg-[#2b2b2b]" />
                            <Clock size={18} strokeWidth={1.5} />
                            <span className="flex-1 w-0.5 bg-[#2b2b2b]" />
                        </div>
                        <p className="flex-1 text-[#a0a0a0]"><span className="font-medium text-[#e4e4e4]">{date}</span> (3 days ago)</p>
                        {index === 0 && <a href="#" className="text-[#4aa3dc]">Aktuelle Version</a>}
                    </li>
                ))}
            </ul>
        </section>
    )
}

export default function App() {
    return (
        <div className="h-screen px-14 pt-[38px] pb-[74px] bg-white overflow-hidden">
            <div className="h-full flex flex-col rounded-[10px] bg-[#111111] ring-1 ring-black border border-[#555555] shadow-[0_22px_50px_rgba(0,0,0,0.6)]">
                <BrowserBar />
                <main className="flex-1 min-h-0 px-16 pt-16 pb-[62px] flex justify-center">
                    <div className="w-full max-w-[1202px] flex overflow-hidden rounded-2xl bg-[#212121] font-['Nunito','Lato',sans-serif] font-medium">
                        <Sidebar />
                        <ItemList />
                        <Detail />
                    </div>
                </main>
            </div>
        </div>
    )
}
